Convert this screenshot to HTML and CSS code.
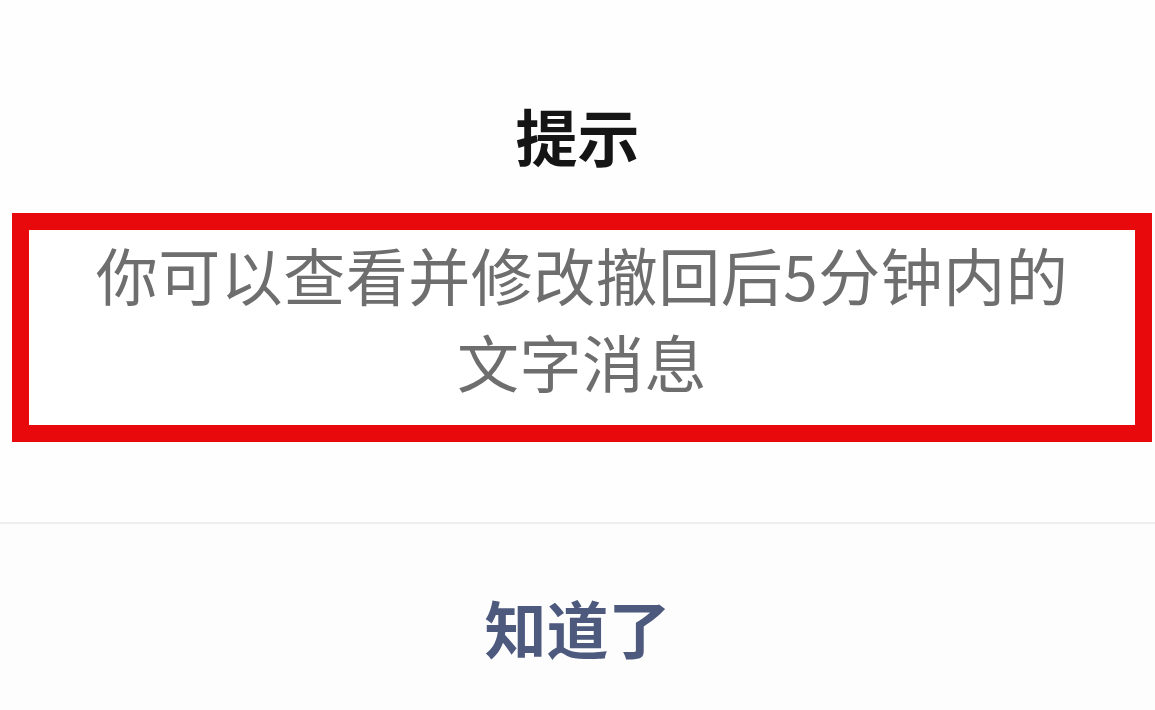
FILE: index.html
```html
<!DOCTYPE html>
<html lang="zh-CN">
<head>
<meta charset="utf-8">
<title>提示</title>
<link rel="stylesheet" href="styles.css">
</head>
<body>
<div class="dialog">
  <div class="dialog-title">提示</div>
  <div class="dialog-body">
    <p class="dialog-message">你可以查看并修改撤回后5分钟内的<br>文字消息</p>
  </div>
  <div class="dialog-divider"></div>
  <div class="dialog-actions">
    <span class="dialog-button">知道了</span>
  </div>
</div>
</body>
</html>
```
FILE: styles.css
```css
html, body {
  margin: 0;
  padding: 0;
  background: #ffffff;
}
body {
  width: 1155px;
  height: 710px;
  overflow: hidden;
  font-family: "Noto Sans CJK SC", "Noto Sans", sans-serif;
}
.dialog {
  display: flex;
  flex-direction: column;
  width: 1155px;
  height: 710px;
  background: #fefefe;
}
.dialog-title {
  padding-top: 103px;
  height: 64px;
  line-height: 64px;
  font-size: 62px;
  font-weight: 700;
  color: #151515;
  text-align: center;
}
.dialog-body {
  margin: 46px 3px 0 12px;
  height: 195px;
  border: 17px solid #e8090d;
  display: flex;
  align-items: center;
  justify-content: center;
  background: #ffffff;
}
.dialog-message {
  margin: 0;
  padding-bottom: 20px;
  font-size: 62px;
  line-height: 87px;
  letter-spacing: 0.5px;
  color: #6e6e6e;
  text-align: center;
}
.dialog-divider {
  margin-top: 80px;
  height: 2px;
  background: #eeeeee;
}
.dialog-actions {
  flex: 1;
  display: flex;
  justify-content: center;
  padding-top: 71px;
  background: #fdfdfd;
}
.dialog-button {
  height: 64px;
  line-height: 64px;
  font-size: 62px;
  font-weight: 700;
  color: #4d5a7e;
}
```
